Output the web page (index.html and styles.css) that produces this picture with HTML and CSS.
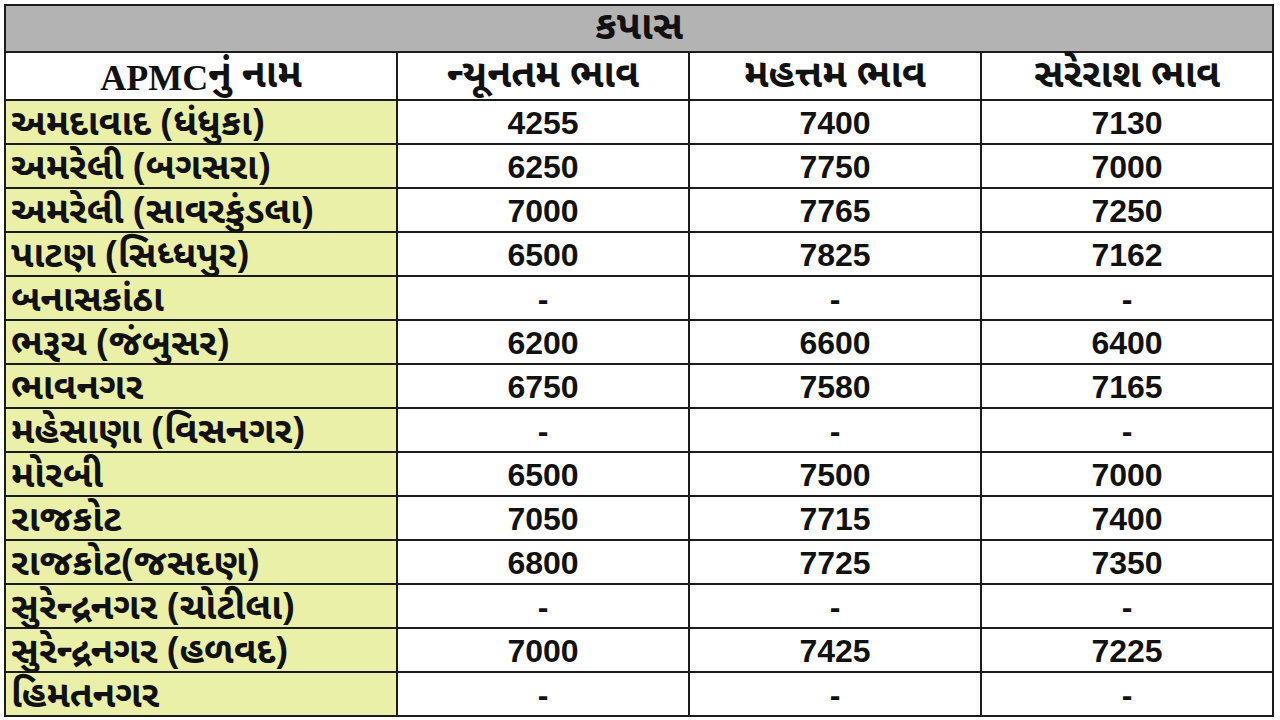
FILE: index.html
```html
<!DOCTYPE html>
<html lang="gu">
<head>
<meta charset="utf-8">
<title>કપાસ</title>
<link rel="stylesheet" href="styles.css">
</head>
<body>
<div class="sheet">
<table class="prices">
  <colgroup>
    <col class="c-name">
    <col class="c-val">
    <col class="c-val">
    <col class="c-val">
  </colgroup>
  <thead>
    <tr class="title-row"><th colspan="4"><div class="in">કપાસ</div></th></tr>
    <tr class="head-row">
      <th><div class="in"><span class="latin">APMC</span>નું નામ</div></th>
      <th><div class="in">ન્યૂનતમ ભાવ</div></th>
      <th><div class="in">મહત્તમ ભાવ</div></th>
      <th><div class="in">સરેરાશ ભાવ</div></th>
    </tr>
  </thead>
  <tbody>
    <tr><td class="name"><div class="in">અમદાવાદ (ધંધુકા)</div></td><td><div class="in">4255</div></td><td><div class="in">7400</div></td><td><div class="in">7130</div></td></tr>
    <tr><td class="name"><div class="in">અમરેલી (બગસરા)</div></td><td><div class="in">6250</div></td><td><div class="in">7750</div></td><td><div class="in">7000</div></td></tr>
    <tr><td class="name"><div class="in">અમરેલી (સાવરકુંડલા)</div></td><td><div class="in">7000</div></td><td><div class="in">7765</div></td><td><div class="in">7250</div></td></tr>
    <tr><td class="name"><div class="in">પાટણ (સિધ્ધપુર)</div></td><td><div class="in">6500</div></td><td><div class="in">7825</div></td><td><div class="in">7162</div></td></tr>
    <tr><td class="name"><div class="in">બનાસકાંઠા</div></td><td><div class="in">-</div></td><td><div class="in">-</div></td><td><div class="in">-</div></td></tr>
    <tr><td class="name"><div class="in">ભરૂચ (જંબુસર)</div></td><td><div class="in">6200</div></td><td><div class="in">6600</div></td><td><div class="in">6400</div></td></tr>
    <tr><td class="name"><div class="in">ભાવનગર</div></td><td><div class="in">6750</div></td><td><div class="in">7580</div></td><td><div class="in">7165</div></td></tr>
    <tr><td class="name"><div class="in">મહેસાણા (વિસનગર)</div></td><td><div class="in">-</div></td><td><div class="in">-</div></td><td><div class="in">-</div></td></tr>
    <tr><td class="name"><div class="in">મોરબી</div></td><td><div class="in">6500</div></td><td><div class="in">7500</div></td><td><div class="in">7000</div></td></tr>
    <tr><td class="name"><div class="in">રાજકોટ</div></td><td><div class="in">7050</div></td><td><div class="in">7715</div></td><td><div class="in">7400</div></td></tr>
    <tr><td class="name"><div class="in">રાજકોટ(જસદણ)</div></td><td><div class="in">6800</div></td><td><div class="in">7725</div></td><td><div class="in">7350</div></td></tr>
    <tr><td class="name"><div class="in">સુરેન્દ્રનગર (ચોટીલા)</div></td><td><div class="in">-</div></td><td><div class="in">-</div></td><td><div class="in">-</div></td></tr>
    <tr><td class="name"><div class="in">સુરેન્દ્રનગર (હળવદ)</div></td><td><div class="in">7000</div></td><td><div class="in">7425</div></td><td><div class="in">7225</div></td></tr>
    <tr><td class="name"><div class="in">હિમતનગર</div></td><td><div class="in">-</div></td><td><div class="in">-</div></td><td><div class="in">-</div></td></tr>
  </tbody>
</table>
</div>
</body>
</html>
```
FILE: styles.css
```css
html, body {
  margin: 0;
  padding: 0;
  background: #ffffff;
}

body {
  width: 1280px;
  height: 720px;
  overflow: hidden;
  font-family: "Noto Sans Gujarati", "Lohit Gujarati", "Shruti", "Noto Sans", "Liberation Sans", sans-serif;
  color: #111111;
}

.sheet {
  padding: 4px 0 0 4px;
}

.prices {
  border-collapse: collapse;
  table-layout: fixed;
  width: 1269px;
  border: 2px solid #1c1c1c;
}

.c-name { width: 392px; }
.c-val { width: 292px; }

.prices th,
.prices td {
  border: 2px solid #1c1c1c;
  padding: 0;
  vertical-align: top;
  font-weight: 700;
  white-space: nowrap;
}

.in {
  display: flex;
  align-items: center;
  justify-content: center;
  overflow: visible;
  box-sizing: border-box;
}

.title-row th {
  background: #b3b3b3;
}

.title-row .in {
  height: 45px;
  font-size: 40px;
  line-height: 40px;
  padding-top: 1px;
}

.head-row th {
  background: #ffffff;
}

.head-row .in {
  height: 46px;
  font-size: 39px;
  line-height: 40px;
  padding-top: 3px;
}

.latin {
  font-family: "Liberation Serif", serif;
  font-size: 36px;
}

.prices tbody td .in {
  height: 42px;
  font-family: "Liberation Sans", Arial, sans-serif;
  font-size: 32px;
  line-height: 34px;
  padding-top: 2px;
}

.prices tbody td.name {
  background: #ebf0a9;
}

.prices tbody td.name .in {
  justify-content: flex-start;
  padding-left: 5px;
  padding-top: 7px;
  font-family: "Noto Sans Gujarati", "Lohit Gujarati", "Shruti", "Noto Sans", "Liberation Sans", sans-serif;
  font-size: 37px;
  line-height: 32px;
}
```
